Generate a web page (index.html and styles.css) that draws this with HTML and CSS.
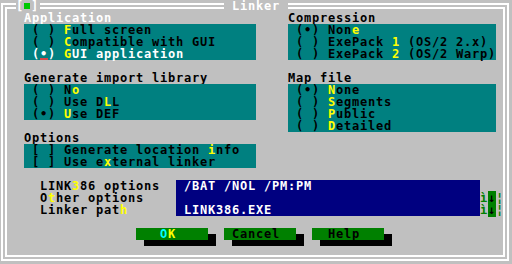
FILE: index.html
```html
<!DOCTYPE html>
<html lang="en">

<head>
    <meta charset="UTF-8">
    <title>Linker</title>
    <link rel="stylesheet" href="styles.css">
</head>

<body>
    <div class="dialog">
        <div class="frame"></div>
        <div class="close-box">[<i class="close-dot"></i>]</div>
        <div class="title"> Linker </div>

        <div class="group-label label-focus app-label">Application</div>
        <div class="cluster app-cluster">
            <div class="item"> ( ) <span class="hk">F</span>ull screen</div>
            <div class="item"> ( ) <span class="hk">C</span>ompatible with GUI</div>
            <div class="item item-sel"> (<span class="cursor">•</span>) <span class="hk">G</span>UI application</div>
        </div>

        <div class="group-label comp-label">Compression</div>
        <div class="cluster comp-cluster">
            <div class="item"> (•) Non<span class="hk">e</span></div>
            <div class="item"> ( ) ExePack <span class="hk">1</span> (OS/2 2.x)</div>
            <div class="item"> ( ) ExePack <span class="hk">2</span> (OS/2 Warp)</div>
        </div>

        <div class="group-label imp-label">Generate import library</div>
        <div class="cluster imp-cluster">
            <div class="item"> ( ) N<span class="hk">o</span></div>
            <div class="item"> ( ) Use D<span class="hk">L</span>L</div>
            <div class="item"> (•) <span class="hk">U</span>se DEF</div>
        </div>

        <div class="group-label map-label">Map file</div>
        <div class="cluster map-cluster">
            <div class="item"> (•) <span class="hk">N</span>one</div>
            <div class="item"> ( ) <span class="hk">S</span>egments</div>
            <div class="item"> ( ) <span class="hk">P</span>ublic</div>
            <div class="item"> ( ) <span class="hk">D</span>etailed</div>
        </div>

        <div class="group-label opt-label">Options</div>
        <div class="cluster opt-cluster">
            <div class="item"> [ ] Generate location <span class="hk">i</span>nfo</div>
            <div class="item"> [ ] Use e<span class="hk">x</span>ternal linker</div>
        </div>

        <div class="field-labels">
            <div class="item">LINK<span class="hk">3</span>86 options</div>
            <div class="item">O<span class="hk">t</span>her options</div>
            <div class="item">Linker pat<span class="hk">h</span></div>
        </div>
        <div class="fields">
            <div class="item"> /BAT /NOL /PM:PM</div>
            <div class="item"></div>
            <div class="item"> LINK386.EXE</div>
        </div>
        <div class="history">
            <div class="item"><span class="hist-side">ì</span><span class="hist-arrow">↓</span><span class="hist-side">¦</span></div>
            <div class="item"><span class="hist-side">ì</span><span class="hist-arrow">↓</span><span class="hist-side">¦</span></div>
        </div>

        <div class="buttons">
            <div class="button button-default"><span class="btn-cyan">O</span><span class="hk">K</span></div>
            <div class="button button-cancel">Cancel</div>
            <div class="button button-help">Help</div>
        </div>
    </div>
</body>

</html>
```

FILE: styles.css
```css
body {
    margin: 0;
    background: #c0c0c0;
    font-family: "DejaVu Sans Mono", monospace;
    font-size: 12px;
    font-weight: bold;
    letter-spacing: 0.776px; /* 8px per cell */
    line-height: 12px;
    color: #000;
    overflow: hidden;
}

/* 64 x 22 text cells of 8 x 12 */
.dialog {
    display: grid;
    grid-template-columns: repeat(64, 8px);
    grid-template-rows: repeat(22, 12px);
    width: 512px;
    height: 264px;
}

.frame {
    grid-column: 1 / -1;
    grid-row: 1 / -1;
    margin: 3px 3px 3px 1px;
    border: 6px double #fff;
}

.close-box,
.title,
.group-label,
.item,
.button {
    white-space: pre;
}

.close-box {
    grid-column: 3 / 6;
    grid-row: 1;
    background: #c0c0c0;
    color: #fff;
}

.close-dot {
    display: inline-block;
    width: 6px;
    height: 6px;
    margin: 0 1px 0 0;
    background: #00c800;
    vertical-align: 1px;
}

.title {
    grid-column: 29 / 37;
    grid-row: 1;
    background: #c0c0c0;
    color: #fff;
}

.label-focus {
    color: #fff;
}

.cluster {
    background: #008080;
    display: flex;
    flex-direction: column;
}

.item {
    height: 12px;
}

.item-sel {
    color: #fff;
}

.hk {
    color: #ffff00;
}

.cursor {
    display: inline-block;
    width: 8px;
    box-shadow: inset 0 -2px #d04848;
}

.app-label { grid-column: 4 / 20; grid-row: 2; }
.app-cluster { grid-column: 4 / 33; grid-row: 3 / 6; }

.comp-label { grid-column: 37 / 52; grid-row: 2; }
.comp-cluster { grid-column: 37 / 63; grid-row: 3 / 6; }

.imp-label { grid-column: 4 / 30; grid-row: 7; }
.imp-cluster { grid-column: 4 / 33; grid-row: 8 / 11; }

.map-label { grid-column: 37 / 52; grid-row: 7; }
.map-cluster { grid-column: 37 / 63; grid-row: 8 / 12; }

.opt-label { grid-column: 4 / 20; grid-row: 12; }
.opt-cluster { grid-column: 4 / 33; grid-row: 13 / 15; }

.field-labels {
    grid-column: 6 / 23;
    grid-row: 16 / 19;
}

.fields {
    grid-column: 23 / 61;
    grid-row: 16 / 19;
    background: #000080;
    color: #fff;
}

.history {
    grid-column: 61 / 64;
    grid-row: 17 / 19;
}

.hist-side {
    color: #008000;
}

.hist-arrow {
    background: #008000;
    color: #000;
}

.buttons {
    grid-column: 18 / 58;
    grid-row: 20;
    display: flex;
    gap: 16px;
}

.button {
    width: 72px;
    height: 12px;
    background: #008000;
    box-shadow: 8px 6px 0 #000;
}

.button-default {
    padding-left: 24px;
    width: 48px;
}

.button-cancel {
    padding-left: 8px;
    width: 64px;
}

.button-help {
    padding-left: 16px;
    width: 56px;
}

.btn-cyan {
    color: #00ffff;
}
```
